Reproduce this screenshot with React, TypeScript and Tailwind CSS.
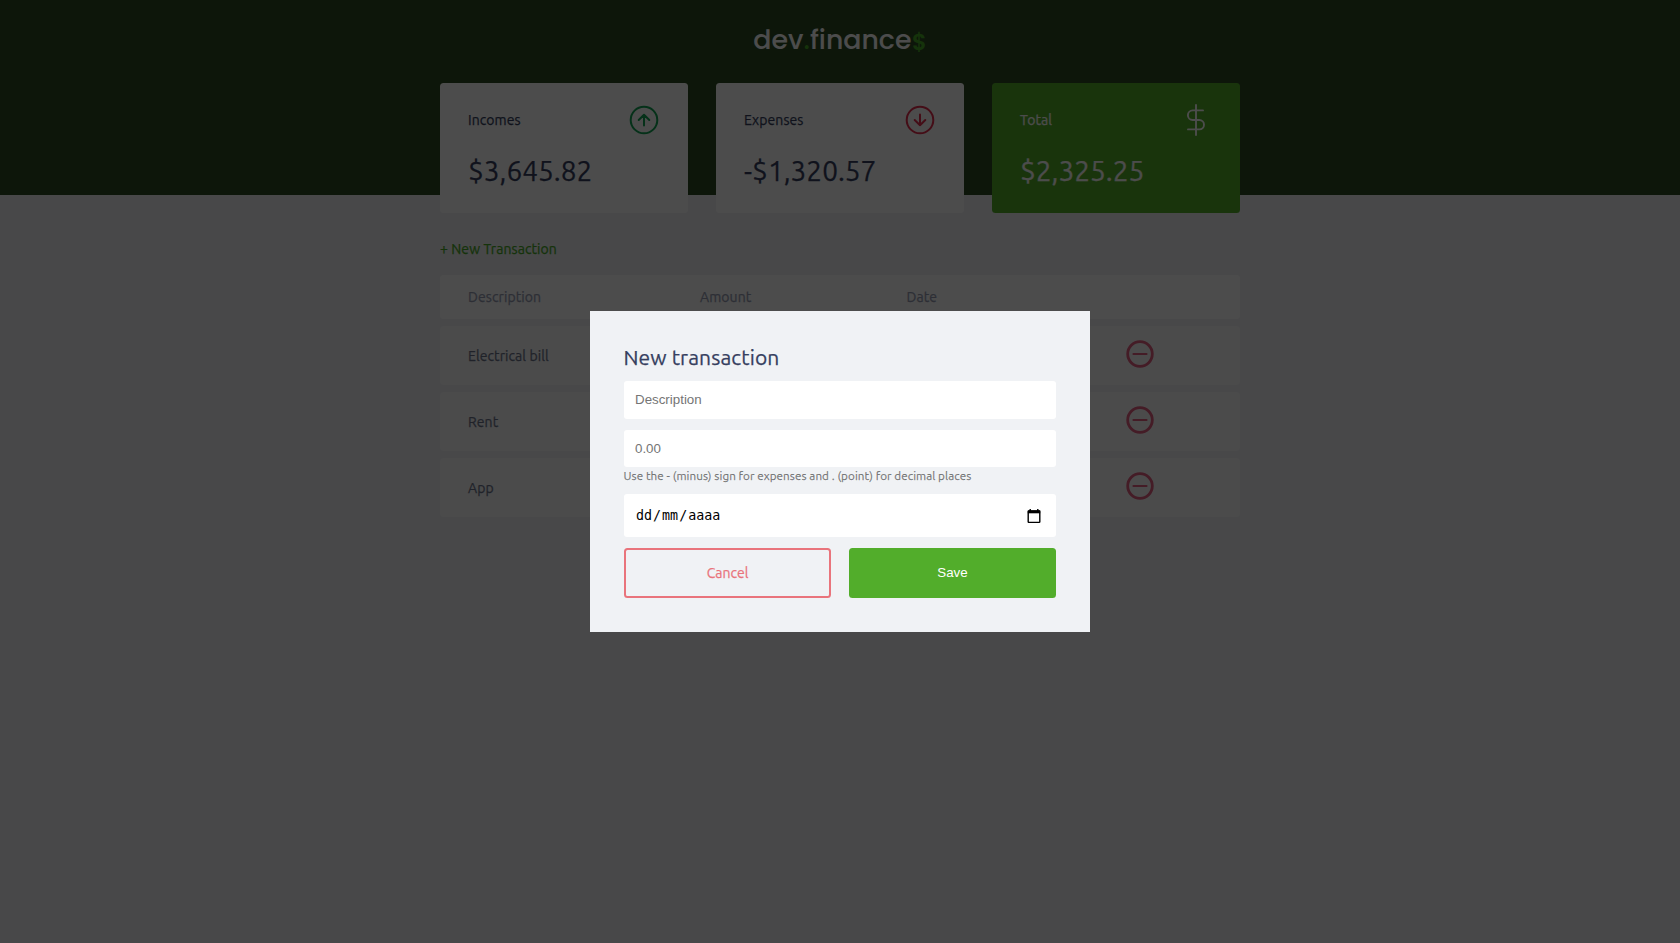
import React from 'react';

type Card = { title: string; value: string; icon: React.ReactNode; total?: boolean };

const ArrowIcon = ({ down = false }: { down?: boolean }) => (
  <svg
    width="32"
    height="32"
    viewBox="0 0 32 32"
    fill="none"
    strokeWidth="2"
    strokeLinecap="round"
    strokeLinejoin="round"
    className={down ? 'rotate-180 stroke-[#e52e4d]' : 'stroke-[#12a454]'}
  >
    <circle cx="16" cy="16" r="13.3" />
    <path d="M16 21.4V10.8M10.7 16L16 10.7L21.3 16" />
  </svg>
);

const DollarIcon = () => (
  <svg
    width="32"
    height="32"
    viewBox="0 0 32 32"
    fill="none"
    stroke="#ffffff"
    strokeWidth="1.9"
    strokeLinecap="round"
    strokeLinejoin="round"
  >
    <path d="M16 1v30M23 6.4H12.7a4.65 4.65 0 0 0 0 9.6h6.6a4.65 4.65 0 0 1 0 9.4H8" />
  </svg>
);

const MinusIcon = () => (
  <svg width="28" height="28" viewBox="0 0 28 28" fill="none" stroke="#e0204f" strokeLinecap="round">
    <circle cx="14" cy="14" r="12.3" strokeWidth="2.8" />
    <path d="M7.5 14h13" strokeWidth="2.2" />
  </svg>
);

const cards: Card[] = [
  { title: 'Incomes', value: '$3,645.82', icon: <ArrowIcon /> },
  { title: 'Expenses', value: '-$1,320.57', icon: <ArrowIcon down /> },
  { title: 'Total', value: '$2,325.25', icon: <DollarIcon />, total: true },
];

const rows = ['Electrical bill', 'Rent', 'App'];

const CalendarIcon = () => (
  <svg width="14" height="16" viewBox="0 0 14 16" fill="none">
    <path d="M3.2 1v2M10.8 1v2" stroke="#000" strokeWidth="1.4" />
    <rect x="1.2" y="3" width="11.6" height="11.4" rx="0.6" stroke="#000" strokeWidth="1.4" />
    <path d="M0.8 2.4h12.4v2.9H0.8z" fill="#000" />
  </svg>
);

function Modal() {
  return (
    <div className="fixed inset-0 flex items-center justify-center bg-black/70">
      <div className="flex h-[321px] w-[500px] flex-col bg-[#f0f2f5] px-[34px] pt-[34px]">
        <h2 className="-ml-[0.5px] h-9 text-[21px] leading-6 tracking-[0.13px] text-[#363f5f]">New transaction</h2>
        <form className="flex flex-col">
          <input
            placeholder="Description"
            className="h-[38px] rounded-[3px] bg-white px-[11px] pb-0.5 font-['Liberation_Sans',sans-serif] text-[13.333px] tracking-normal [-webkit-text-stroke:0] placeholder:text-[#757575]"
          />
          <input
            placeholder="0.00"
            className="mt-[11px] h-[37px] rounded-[3px] bg-white px-[11px] font-['Liberation_Sans',sans-serif] text-[13.333px] tracking-normal [-webkit-text-stroke:0] placeholder:text-[#757575]"
          />
          <small className="-ml-[0.5px] h-[27px] pt-px text-[11.67px] leading-4 tracking-[0.07px] whitespace-nowrap text-[#363636]/60">
            Use the - (minus) sign for expenses and . (point) for decimal places
          </small>
          <div className="flex h-[43px] items-center justify-between rounded-[3px] bg-white pr-[15px] pl-[11px] font-['DejaVu_Sans_Mono',monospace] text-[13.333px] tracking-normal text-black [-webkit-text-stroke:0]">
            <span className="flex">
              <span className="px-px">dd</span>/<span className="px-px">mm</span>/<span className="px-px">aaaa</span>
            </span>
            <CalendarIcon />
          </div>
          <div className="mt-[11px] grid h-[50px] grid-cols-2 gap-[18px]">
            <button type="button" className="rounded-[3.5px] border-2 border-[#e9747c] text-[14px] tracking-normal text-[#e9747c]">
              Cancel
            </button>
            <button
              type="button"
              className="rounded-[3.5px] bg-[#52ad2b] font-['Liberation_Sans',sans-serif] text-[13.333px] tracking-normal text-white [-webkit-text-stroke:0]"
            >
              Save
            </button>
          </div>
        </form>
      </div>
    </div>
  );
}

export default function App() {
  return (
    <div className="h-screen overflow-hidden bg-[#f0f2f5] font-[Ubuntu,'Noto_Sans',sans-serif] text-[14px] tracking-[0.08px] [-webkit-text-stroke:0.25px]">
      <header className="h-[195px] bg-[#2d4a22] pt-[19px]">
        <h1 className="flex h-[42px] items-baseline justify-center font-[Poppins,Inter,sans-serif] text-[26.8px] leading-[42px] font-medium tracking-normal text-white [-webkit-text-stroke:0] [font-feature-settings:'cv11']">
          <span>
            dev<span className="text-[#49aa26]">.</span>finance
          </span>
          <span className="relative top-px ml-[0.5px] text-[22.5px] leading-none font-semibold text-[#49aa26]">$</span>
        </h1>
      </header>

      <main className="mx-auto -mt-28 w-[800px]">
        <section className="grid grid-cols-3 gap-7">
          {cards.map((card) => (
            <article
              key={card.title}
              className={`h-[130px] rounded-[3.5px] px-7 pt-[21px] ${
                card.total ? 'bg-[#55b02b] text-white' : 'bg-white text-[#363f5f]'
              }`}
            >
              <h3 className="flex h-8 items-center justify-between">
                <span>{card.title}</span>
                {card.icon}
              </h3>
              <p className="mt-[14px] text-[28px] leading-[42px] tracking-normal">{card.value}</p>
            </article>
          ))}
        </section>

        <section className="pt-[26px]">
          <a className="block h-9 leading-[21px] text-[#49aa26]">+ New Transaction</a>
          <div className="flex flex-col gap-[7px] text-[#969cb3]">
            <div className="grid h-11 grid-cols-[232px_206.5px_219.5px_142px] items-center rounded-[3.5px] bg-white">
              <span className="pl-7">Description</span>
              <span className="pl-7">Amount</span>
              <span className="pl-7">Date</span>
              <span />
            </div>
            {rows.map((row) => (
              <div
                key={row}
                className="grid h-[59px] grid-cols-[232px_206.5px_219.5px_142px] items-center rounded-[3.5px] bg-white opacity-70"
              >
                <span className="pt-0.5 pl-7 text-[#363f5f]">{row}</span>
                <span />
                <span />
                <span className="pb-[3px] pl-7">
                  <MinusIcon />
                </span>
              </div>
            ))}
          </div>
        </section>
      </main>

      <Modal />
    </div>
  );
}
